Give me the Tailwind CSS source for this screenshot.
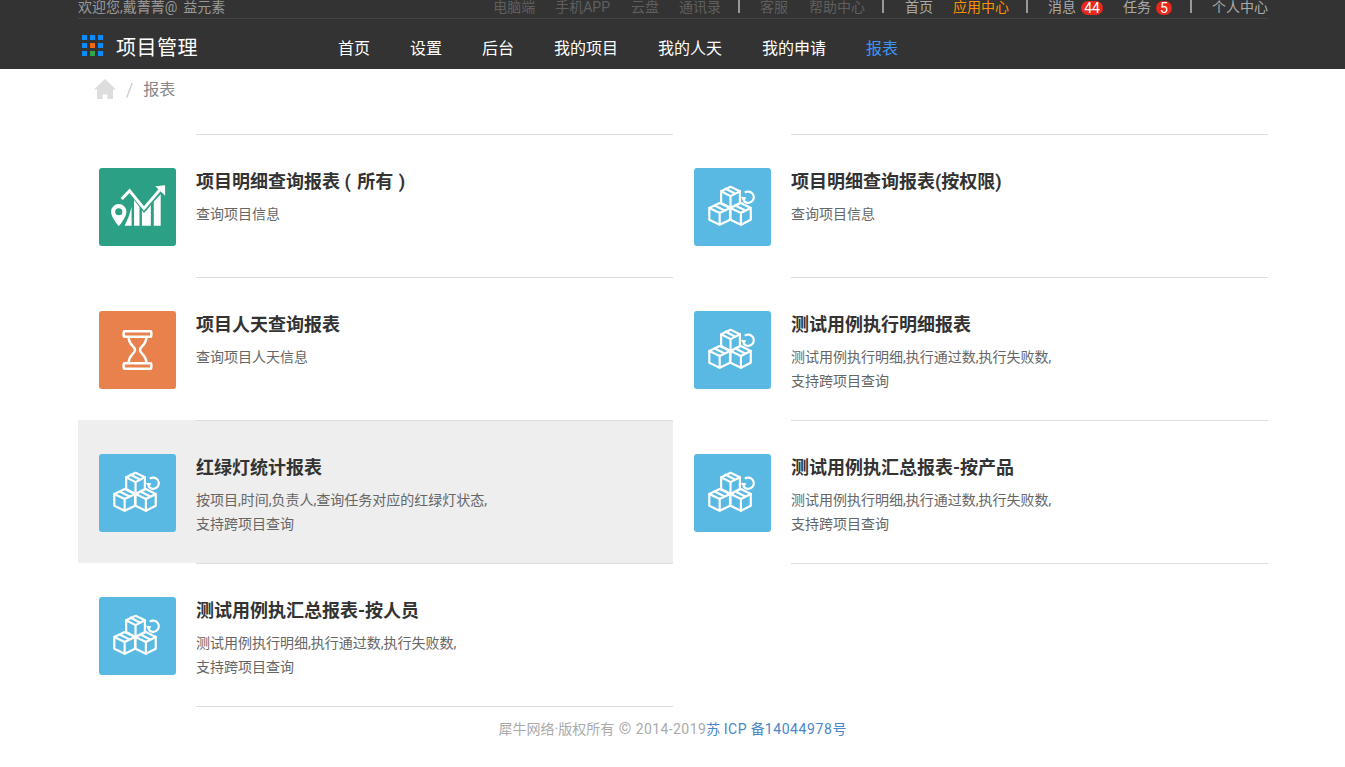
<!DOCTYPE html>
<html lang="zh-CN">
<head>
  <meta charset="UTF-8">
  <meta name="viewport" content="width=device-width, initial-scale=1.0">
  <title>项目管理 - 报表</title>
  <script src="https://cdn.jsdelivr.net/npm/@tailwindcss/browser@4"></script>
</head>
<body class="bg-white font-['Roboto','Noto_Sans_CJK_SC',sans-serif] text-[14px] text-[#666]">
  <svg class="hidden">
    <symbol id="boxes" viewBox="0 0 78 78">
      <g fill="none" stroke="#fff" stroke-width="2.200" stroke-linejoin="round" stroke-linecap="round">
        <path d="M37 18.500l9.500 4.500v12l-9.500 5-9.500-5v-12z"/>
        <path d="M27.500 23l9.500 5 9.500-5M37 28v12M32 20.500l10 5"/>
        <path d="M26 35l10.500 5v12l-10.500 5-10.500-5v-12z" fill="#5ab9e3"/>
        <path d="M15.500 40l10.500 5 10.500-5M26 45v12M21 37.500l10 5"/>
        <path d="M47.500 35l10 5v12l-10 5-10.500-5v-12z" fill="#5ab9e3"/>
        <path d="M37 40l10.500 5 10-5M47.500 45v12M42 37.500l10 5"/>
      </g>
      <path d="M51.500 24.500a5.700 5.700 0 1 1-1.500 7.500" fill="none" stroke="#fff" stroke-width="2.200"/>
      <path d="M47.500 28.500l5.500.5-2.500 5z" fill="#fff"/>
    </symbol>
  </svg>

  <header class="bg-[#333] h-[69px]">
    <div class="w-[1190px] ml-[78px]">
      <div class="h-[19px] border-b border-[#444] flex justify-between leading-[14px] text-[14px]">
        <div class="text-[#999]">欢迎您,戴菁菁@<span class="ml-[6px]">益元素</span></div>
        <div class="flex items-start">
          <a class="text-[#5f5f5f] mr-[20px]">电脑端</a>
          <a class="text-[#5f5f5f] mr-[21px]">手机APP</a>
          <a class="text-[#5f5f5f] mr-[20px]">云盘</a>
          <a class="text-[#5f5f5f] mr-[17px]">通讯录</a>
          <span class="w-[2px] h-[13px] bg-[#999] mr-[20px]"></span>
          <a class="text-[#5f5f5f] mr-[21px]">客服</a>
          <a class="text-[#5f5f5f] mr-[17px]">帮助中心</a>
          <span class="w-[2px] h-[13px] bg-[#999] mr-[21px]"></span>
          <a class="text-[#aaa] mr-[20px]">首页</a>
          <a class="text-[#ff9000] mr-[17px]">应用中心</a>
          <span class="w-[2px] h-[13px] bg-[#999] mr-[20px]"></span>
          <a class="text-[#aaa] mr-[5px]">消息</a>
          <span class="bg-[#e8281c] text-white rounded-full w-[22px] h-[14px] mt-[1px] text-center text-[14px] leading-[14px] mr-[20px]">44</span>
          <a class="text-[#aaa] mr-[5px]">任务</a>
          <span class="bg-[#e8281c] text-white rounded-full w-[16px] h-[14px] mt-[1px] text-center text-[14px] leading-[14px] mr-[18px]">5</span>
          <span class="w-[2px] h-[13px] bg-[#999] mr-[20px]"></span>
          <a class="text-[#aaa]">个人中心</a>
        </div>
      </div>
      <div class="flex items-center h-[50px]">
        <div class="grid grid-cols-3 gap-[3px] w-[21px] ml-[4px] mr-[13px] mt-[3px]">
          <i class="size-[5px] bg-[#0a8cff]"></i><i class="size-[5px] bg-[#0a8cff]"></i><i class="size-[5px] bg-[#0a8cff]"></i>
          <i class="size-[5px] bg-[#0a8cff]"></i><i class="size-[5px] bg-[#f06a14]"></i><i class="size-[5px] bg-[#0a8cff]"></i>
          <i class="size-[5px] bg-[#0a8cff]"></i><i class="size-[5px] bg-[#2ea84a]"></i><i class="size-[5px] bg-[#0a8cff]"></i>
        </div>
        <span class="text-white text-[20px] tracking-[0.5px] w-[222px] mt-[7px] leading-[26px]">项目管理</span>
        <nav class="flex gap-[40px] text-[16px] text-white mt-[10px]">
          <a>首页</a>
          <a>设置</a>
          <a>后台</a>
          <a>我的项目</a>
          <a>我的人天</a>
          <a>我的申请</a>
          <a class="text-[#3d94f6]">报表</a>
        </nav>
      </div>
    </div>
  </header>

  <main class="w-[1190px] ml-[78px]">
    <div class="h-[65px] flex items-start pt-[10px] pl-[16px] text-[16px] text-[#888]">
      <svg class="w-[22px] h-[20px]" viewBox="0 0 22 20"><path d="M11 0L22 10.500h-3V20h-5.500v-4.500h-5V20H3v-9.500H0z" fill="#ddd"/></svg>
      <span class="ml-[10px] mr-[10px] text-[#bbb] leading-[22px] text-[18px] font-light">/</span>
      <span class="leading-[22px]">报表</span>
    </div>

    <div class="grid grid-cols-2">
      <a class="flex h-[143px] pl-[21px]">
        <div class="w-[77px] h-[78px] mt-[34px] rounded-[3px] bg-[#2ba084]">
          <svg class="w-full h-full" viewBox="0 0 78 78">
            <path fill-rule="evenodd" d="M20 36a7.800 7.800 0 0 0-7.800 7.800C12.200 49.500 20 58.500 20 58.500s7.800-9 7.800-14.700A7.800 7.800 0 0 0 20 36zm0 4.200a3.600 3.600 0 1 1 0 7.200 3.600 3.600 0 0 1 0-7.200z" fill="#fff"/>
            <path d="M26 58l4-9 3-10v19zM35.500 58V32l5.500 7v19zM43.500 58V42.500l2 2.500 3-3 4-5V58zM55.500 58V33.500l7-7.500v32z" fill="#fff"/>
            <path d="M23 31l8-8.500 14.500 18L63 20" fill="none" stroke="#fff" stroke-width="3"/>
            <path d="M57 18l10-1v10.500z" fill="#fff"/>
          </svg>
        </div>
        <div class="flex-1 ml-[20px] border-t border-[#ddd] pt-[34px]">
          <h3 class="text-[18px] font-bold leading-[26px] text-[#333] whitespace-pre">项目明细查询报表 <span class="tracking-[1px]">( </span>所有<span class="tracking-[1px]"> )</span></h3>
          <p class="mt-[7px] leading-[24px]">查询项目信息</p>
        </div>
      </a>
      <a class="flex h-[143px] pl-[21px]">
        <div class="w-[77px] h-[78px] mt-[34px] rounded-[3px] bg-[#5ab9e3]"><svg class="w-full h-full"><use href="#boxes"/></svg></div>
        <div class="flex-1 ml-[20px] border-t border-[#ddd] pt-[34px]">
          <h3 class="text-[18px] font-bold leading-[26px] text-[#333]">项目明细查询报表(按权限)</h3>
          <p class="mt-[7px] leading-[24px]">查询项目信息</p>
        </div>
      </a>

      <a class="flex h-[143px] pl-[21px]">
        <div class="w-[77px] h-[78px] mt-[34px] rounded-[3px] bg-[#e8814c]">
          <svg class="w-full h-full" viewBox="0 0 78 78">
            <g fill="none" stroke="#fff" stroke-width="2.500" stroke-linejoin="round">
              <rect x="25" y="20" width="28" height="5.500" rx="1"/>
              <rect x="25" y="52.500" width="28" height="5.500" rx="1"/>
              <path d="M30 25.500c0 9 6.500 9.500 6.500 13.500s-6.500 4.500-6.500 13.500M48 25.500c0 9-6.500 9.500-6.500 13.500s6.500 4.500 6.500 13.500"/>
            </g>
          </svg>
        </div>
        <div class="flex-1 ml-[20px] border-t border-[#ddd] pt-[34px]">
          <h3 class="text-[18px] font-bold leading-[26px] text-[#333]">项目人天查询报表</h3>
          <p class="mt-[7px] leading-[24px]">查询项目人天信息</p>
        </div>
      </a>
      <a class="flex h-[143px] pl-[21px]">
        <div class="w-[77px] h-[78px] mt-[34px] rounded-[3px] bg-[#5ab9e3]"><svg class="w-full h-full"><use href="#boxes"/></svg></div>
        <div class="flex-1 ml-[20px] border-t border-[#ddd] pt-[34px]">
          <h3 class="text-[18px] font-bold leading-[26px] text-[#333]">测试用例执行明细报表</h3>
          <p class="mt-[7px] leading-[24px]">测试用例执行明细,执行通过数,执行失败数,<br>支持跨项目查询</p>
        </div>
      </a>

      <a class="flex h-[143px] pl-[21px] bg-[#eee]">
        <div class="w-[77px] h-[78px] mt-[34px] rounded-[3px] bg-[#5ab9e3]"><svg class="w-full h-full"><use href="#boxes"/></svg></div>
        <div class="flex-1 ml-[20px] border-t border-[#ddd] pt-[34px]">
          <h3 class="text-[18px] font-bold leading-[26px] text-[#333]">红绿灯统计报表</h3>
          <p class="mt-[7px] leading-[24px]">按项目,时间,负责人,查询任务对应的红绿灯状态,<br>支持跨项目查询</p>
        </div>
      </a>
      <a class="flex h-[143px] pl-[21px]">
        <div class="w-[77px] h-[78px] mt-[34px] rounded-[3px] bg-[#5ab9e3]"><svg class="w-full h-full"><use href="#boxes"/></svg></div>
        <div class="flex-1 ml-[20px] border-y border-[#ddd] pt-[34px] -mb-[1px]">
          <h3 class="text-[18px] font-bold leading-[26px] text-[#333]">测试用例执汇总报表-按产品</h3>
          <p class="mt-[7px] leading-[24px]">测试用例执行明细,执行通过数,执行失败数,<br>支持跨项目查询</p>
        </div>
      </a>

      <a class="flex h-[144px] pl-[21px]">
        <div class="w-[77px] h-[78px] mt-[34px] rounded-[3px] bg-[#5ab9e3]"><svg class="w-full h-full"><use href="#boxes"/></svg></div>
        <div class="flex-1 ml-[20px] border-y border-[#ddd] pt-[34px]">
          <h3 class="text-[18px] font-bold leading-[26px] text-[#333]">测试用例执汇总报表-按人员</h3>
          <p class="mt-[7px] leading-[24px]">测试用例执行明细,执行通过数,执行失败数,<br>支持跨项目查询</p>
        </div>
      </a>
    </div>
  </main>

  <footer class="mt-[12px] text-center leading-[20px] text-[#aaa]">犀牛网络·版权所有 <span class="text-[16px] leading-[16px] mx-[1px]">©</span> <span class="tracking-[0.4px]">2014-2019</span><a class="text-[#4a86c8]">苏 <span class="tracking-[0.6px]">ICP</span> 备<span class="tracking-[0.6px]">14044978</span>号</a></footer>
</body>
</html>
